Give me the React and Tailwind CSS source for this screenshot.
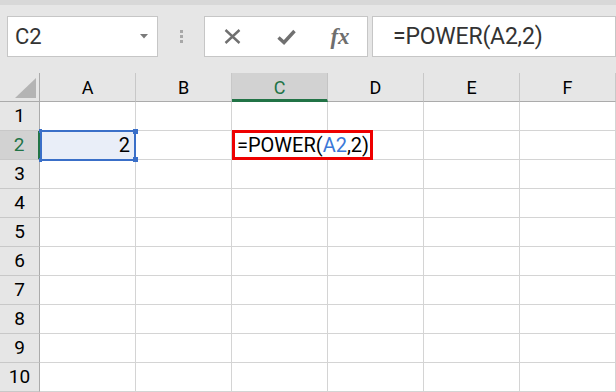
import React from "react";

const cols = ["A", "B", "C", "D", "E", "F"];
const rows = [1, 2, 3, 4, 5, 6, 7, 8, 9, 10];

export default function App() {
  return (
    <div className="w-[616px] h-[392px] overflow-hidden bg-[#e6e6e6] flex flex-col" style={{ fontFamily: "Roboto, 'Noto Sans', sans-serif" }}>
      <div className="h-[5px] bg-[#d8d8d8] shrink-0" />
      {/* toolbar */}
      <div className="flex items-stretch h-[41px] mt-[11px] shrink-0">
        <div className="ml-[7px] w-[151px] bg-white border border-[#c6c6c6] flex items-center justify-between pl-[7px] pr-[9px]">
          <span className="text-[22px] text-[#333] leading-none">C2</span>
          <svg width="8" height="5" viewBox="0 0 8 5"><polygon points="0,0 8,0 4,4.5" fill="#7a7a7a" /></svg>
        </div>
        <div className="w-[46px] flex flex-col items-center justify-center gap-[2px]">
          <div className="w-[3px] h-[3px] bg-[#a8a8a8]" />
          <div className="w-[3px] h-[3px] bg-[#a8a8a8]" />
          <div className="w-[3px] h-[3px] bg-[#a8a8a8]" />
        </div>
        <div className="w-[164px] bg-white border border-[#c6c6c6] flex items-center">
          <div className="w-[54px] flex justify-center">
            <svg width="17" height="15" viewBox="0 0 17 15">
              <path d="M1.5 1 L15.5 14 M15.5 1 L1.5 14" stroke="#707070" strokeWidth="2.4" fill="none" />
            </svg>
          </div>
          <div className="w-[54px] flex justify-center">
            <svg width="19" height="16" viewBox="0 0 19 16">
              <path d="M1.5 8.5 L7 13.5 L17.5 2" stroke="#707070" strokeWidth="3.4" fill="none" strokeLinejoin="miter" />
            </svg>
          </div>
          <div className="w-[54px] flex justify-center">
            <span className="italic font-bold text-[23px] text-[#6e6e6e] leading-none" style={{ fontFamily: "'Liberation Serif', serif" }}>fx</span>
          </div>
        </div>
        <div className="ml-[4px] flex-1 bg-white border border-[#c6c6c6] flex items-center pl-[20px]">
          <span className="text-[23px] text-[#333] leading-none tracking-[-0.2px]">=POWER(A2,2)</span>
        </div>
      </div>
      {/* grid */}
      <div className="mt-[16px] grid grid-cols-[40px_repeat(6,96px)] grid-rows-[29px_repeat(10,29px)]">
        <div className="border-r border-b border-[#ababab] bg-[#e6e6e6] flex items-end justify-end pr-[3px] pb-[3px]">
          <svg width="21" height="20" viewBox="0 0 21 20"><polygon points="21,0 21,20 0,20" fill="#b4b4b4" /></svg>
        </div>
        {cols.map((c) => (
          <div
            key={c}
            className={
              c === "C"
                ? "bg-[#d2d2d2] border-r border-[#c4c4c4] border-b-[3px] border-b-[#217346] flex items-center justify-center text-[18px] text-[#217346] pt-[3px]"
                : "bg-[#e6e6e6] border-r border-[#c8c8c8] border-b border-b-[#ababab] flex items-center justify-center text-[18px] text-black pt-[1px]"
            }
          >
            {c}
          </div>
        ))}
        {rows.map((r) => (
          <React.Fragment key={r}>
            <div
              className={
                r === 2
                  ? "bg-[#d2d2d2] border-r-2 border-r-[#217346] border-b border-b-[#c8c8c8] flex items-center justify-center text-[19px] text-[#217346]"
                  : "bg-[#e6e6e6] border-r border-r-[#ababab] border-b border-b-[#c8c8c8] flex items-center justify-center text-[19px] text-black"
              }
            >
              {r}
            </div>
            {cols.map((c) => {
              if (r === 2 && c === "A") {
                return (
                  <div key={c} className="relative bg-[#e9eef8] border-r border-b border-[#d4d4d4] flex items-center justify-end pr-[5px] text-[20px] text-black">
                    <span className="relative z-10">2</span>
                    <div className="absolute left-[0px] top-[-1px] w-[96px] h-[31px] border-2 border-[#3a6fc8]" />
                    <div className="absolute left-[-1px] top-[-2px] w-[3px] h-[4px] bg-[#3a6fc8]" />
                    <div className="absolute left-[-1px] bottom-[-3px] w-[3px] h-[4px] bg-[#3a6fc8]" />
                    <div className="absolute right-[-3px] top-[-2px] w-[5px] h-[5px] bg-[#3a6fc8]" />
                    <div className="absolute right-[-3px] bottom-[-3px] w-[5px] h-[5px] bg-[#3a6fc8]" />
                  </div>
                );
              }
              if (r === 2 && c === "C") {
                return (
                  <div key={c} className="relative bg-white border-r border-b border-[#d4d4d4] z-10">
                    <div className="absolute left-0 top-[-1px] w-[141px] h-[30px] border-[3px] border-[#ee0000] bg-white flex items-center pl-[2px] text-[20px] text-black whitespace-nowrap leading-none">
                      =POWER(<span className="text-[#3c78d8]">A2</span>,2)
                    </div>
                  </div>
                );
              }
              return <div key={c} className="bg-white border-r border-b border-[#d4d4d4]" />;
            })}
          </React.Fragment>
        ))}
      </div>
    </div>
  );
}
